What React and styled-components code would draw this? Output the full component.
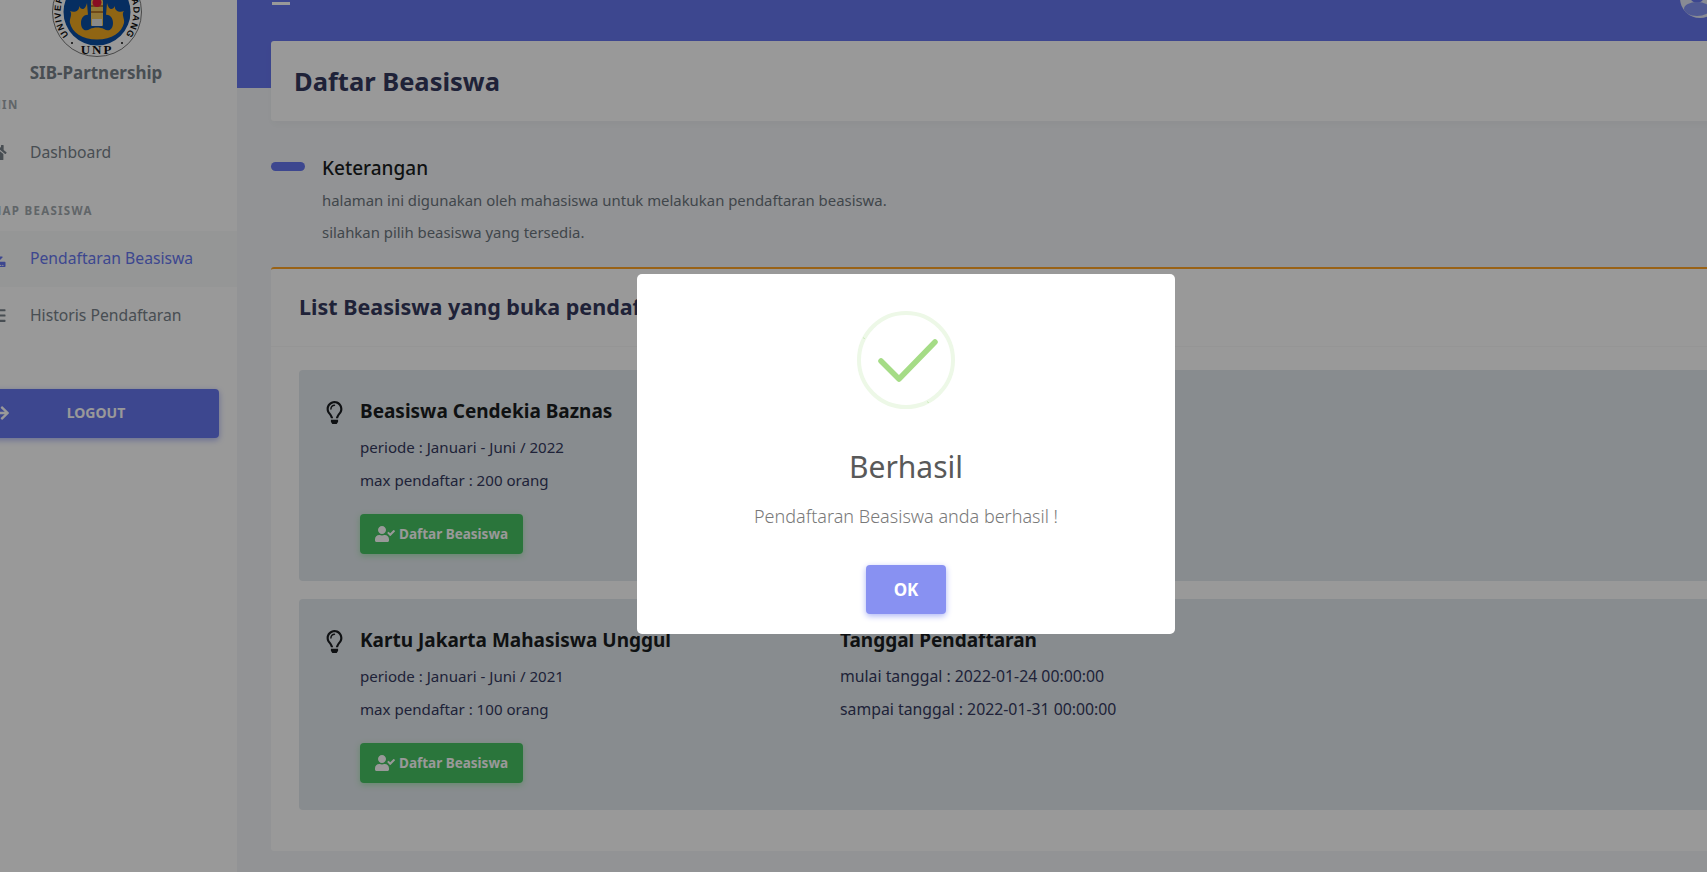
import React from 'react';
import styled, { createGlobalStyle } from 'styled-components';
import {
  FaHome,
  FaDownload,
  FaList,
  FaArrowRight,
  FaRegLightbulb,
  FaUserCheck,
} from 'react-icons/fa';

const GlobalStyle = createGlobalStyle`
  html, body {
    margin: 0;
    height: 100%;
    overflow: hidden;
    background: #f4f6f9;
    font-family: "Noto Sans", "Open Sans", sans-serif;
    color: #6c757d;
  }
  * { box-sizing: border-box; }
`;

const Page = styled.div`
  display: grid;
  grid-template-columns: 237px 1fr;
  height: 872px;
  overflow: hidden;
`;

const Sidebar = styled.aside`
  background: #fff;
  display: flex;
  flex-direction: column;
  align-items: stretch;
  overflow: hidden;
`;

const LogoWrap = styled.div`
  margin: -33px 0 0 52px;
  width: 90px;
  height: 90px;
`;

const BrandName = styled.div`
  margin-top: 4px;
  height: 24px;
  line-height: 24px;
  width: 192px;
  text-align: center;
  font-size: 17px;
  font-weight: 700;
  color: #79828a;
`;

const MenuHeader = styled.div`
  height: 40px;
  line-height: 39px;
  margin-left: ${(p) => p.$offset}px;
  font-size: 11.5px;
  font-weight: 700;
  letter-spacing: 1.3px;
  color: #a1a8ae;
  text-transform: uppercase;
  white-space: nowrap;
`;

const MenuItem = styled.div`
  display: flex;
  align-items: center;
  height: ${(p) => p.$h || 56}px;
  margin-left: -17px;
  padding-bottom: 2px;
  gap: 19px;
  font-size: 15.7px;
  white-space: nowrap;
  color: ${(p) => (p.$active ? '#6777ef' : '#78828a')};
  background: ${(p) => (p.$active ? '#f8fafb' : 'transparent')};

  svg {
    width: 28px;
    height: 17px;
    flex: none;
  }
`;

const Gap = styled.div`
  height: ${(p) => p.$h}px;
  flex: none;
`;

const LogoutButton = styled.div`
  display: grid;
  grid-template-columns: 1fr auto 1fr;
  align-items: center;
  margin: 44px 18px 0 -27px;
  height: 49px;
  padding: 0 18px 2px;
  background: #6777ef;
  border-radius: 4px;
  box-shadow: 0 2px 6px #acb5f6;
  color: #fff;
  font-size: 14px;
  font-weight: 700;

  svg {
    width: 16px;
    height: 16px;
    margin-left: 3px;
  }
`;

const Main = styled.main`
  position: relative;
  min-width: 0;
  overflow: hidden;
`;

const Topbar = styled.div`
  height: 88px;
  background: #6777ef;
  padding: 2px 0 0 35px;
`;

const Hamburger = styled.div`
  width: 18px;
  height: 3px;
  background: #fff;
`;

const Avatar = styled.div`
  position: absolute;
  top: -22px;
  right: -13px;
  width: 40px;
  height: 40px;
`;

const Content = styled.div`
  margin: -47px -40px 0 34px;
`;

const TitleCard = styled.div`
  height: 80px;
  padding-left: 23px;
  display: flex;
  align-items: center;
  background: #fff;
  border-radius: 3px;
  box-shadow: 0 4px 8px rgba(0, 0, 0, 0.03);
`;

const Title = styled.h1`
  margin: 0;
  font-size: 25.5px;
  font-weight: 700;
  color: #34395e;
`;

const Intro = styled.section`
  display: grid;
  grid-template-columns: 34px 1fr;
  column-gap: 17px;
  padding-top: 31px;
  height: 146px;
`;

const Pill = styled.div`
  width: 34px;
  height: 9px;
  margin-top: 10px;
  border-radius: 5px;
  background: #6777ef;
`;

const IntroTitle = styled.div`
  height: 32px;
  line-height: 32px;
  font-size: 19px;
  font-weight: 500;
  color: #191d21;
`;

const IntroLine = styled.p`
  margin: 0;
  height: 32px;
  line-height: 32px;
  font-size: 14.9px;
  color: #6c757d;
`;

const ListCard = styled.section`
  height: 584px;
  background: #fff;
  border-top: 2px solid #ffa426;
  border-radius: 3px;
`;

const ListHeader = styled.div`
  height: 78px;
  padding: 0 0 2px 28px;
  display: flex;
  align-items: center;
  border-bottom: 1px solid #f9f9f9;
`;

const ListTitle = styled.h4`
  margin: 0;
  font-size: 21.5px;
  font-weight: 700;
  color: #34395e;
`;

const ListBody = styled.div`
  display: flex;
  flex-direction: column;
  gap: 18px;
  padding: 23px 0 0 28px;
`;

const Item = styled.article`
  display: grid;
  grid-template-columns: 61px 480px 1fr;
  height: 211px;
  padding-top: 25px;
  background: #e3e9ee;
  border-radius: 4px;
`;

const BulbCell = styled.div`
  padding: 6px 0 0 24px;
  color: #191d21;
  font-size: 23px;
  line-height: 1;
`;

const ItemTitle = styled.h5`
  margin: 0 0 4px;
  height: 32px;
  line-height: 32px;
  font-size: 19px;
  font-weight: 700;
  color: #191d21;
  white-space: nowrap;
`;

const ItemLine = styled.p`
  margin: 0;
  height: 33px;
  line-height: 33px;
  font-size: 15.1px;
  color: #34395e;
  white-space: nowrap;
`;

const DateLine = styled(ItemLine)`
  font-size: 15.8px;
`;

const RegisterButton = styled.div`
  display: inline-flex;
  align-items: center;
  gap: 4px;
  margin-top: 17px;
  height: 40px;
  padding: 0 15px;
  background: #47c363;
  border-radius: 4px;
  box-shadow: 0 2px 6px #a8e6b6;
  color: #fff;
  font-size: 13.5px;
  font-weight: 700;

  svg {
    width: 20px;
    height: 16px;
  }
`;

const Overlay = styled.div`
  position: fixed;
  inset: 0;
  padding: 36px 0 0 105px;
  background: rgba(0, 0, 0, 0.4);
  display: grid;
  place-items: center;
`;

const Modal = styled.div`
  width: 538px;
  height: 360px;
  padding-top: 36px;
  background: #fff;
  border-radius: 5px;
  display: flex;
  flex-direction: column;
  align-items: center;
`;

const ModalTitle = styled.h2`
  margin: 33px 0 0;
  height: 48px;
  line-height: 48px;
  font-size: 30px;
  font-weight: 400;
  color: #595959;
`;

const ModalText = styled.p`
  margin: 10px 0 0;
  height: 30px;
  line-height: 30px;
  font-size: 18px;
  font-weight: 300;
  color: #797979;
`;

const OkButton = styled.button`
  margin-top: 34px;
  width: 80px;
  height: 49px;
  border: 0;
  border-radius: 4px;
  background: #8891f2;
  box-shadow: 0 2px 6px #acb5f6;
  color: #fff;
  font: 700 17px "Noto Sans", sans-serif;
`;

function UnpLogo() {
  return (
    <svg viewBox="0 0 90 90" width="90" height="90">
      <defs>
        <path id="ringPath" d="M45 81.5 A36.5 36.5 0 1 1 45.1 81.5" fill="none" />
      </defs>
      <circle cx="45" cy="45" r="44.5" fill="#fff" stroke="#555" strokeWidth="0.8" />
      <text fontFamily="Liberation Sans, sans-serif" fontSize="9" fontWeight="700" fill="#111">
        <textPath href="#ringPath" startOffset="32" textLength="164" lengthAdjust="spacing">
          UNIVERSITAS NEGERI PADANG
        </textPath>
      </text>
      <circle cx="20" cy="76" r="1" fill="#111" />
      <circle cx="70" cy="76" r="1" fill="#111" />
      <circle cx="45" cy="45" r="33.5" fill="#0b4ea2" />
      {/* gold flames and the U under them */}
      <path d="M35 36 C33 44 29 43 27 39 C28 44 22 46 18 44 C21 47 17 52 18 56 C20 65 30 72.5 45 72.5 C60 72.5 70 65 72 56 C73 52 69 47 72 44 C68 46 62 44 63 39 C61 43 57 44 55 36 L54 48 L36 48 Z" fill="#f0a820" />
      <path d="M29 56 C29 50 33 47 37 48 L53 48 C57 47 61 50 61 56 C61 63 56 65 52 62 C48 60 42 60 38 62 C34 65 29 63 29 56 Z" fill="#0b4ea2" />
      <rect x="39" y="33" width="12" height="26" rx="1" fill="#f2c65a" />
      <rect x="39" y="38" width="12" height="2" fill="#b87a28" />
      <rect x="39" y="44" width="12" height="2" fill="#b87a28" />
      <rect x="40" y="52" width="10" height="7" fill="#e6e6e6" />
      <circle cx="45" cy="35.5" r="4.5" fill="#e5173a" />
      <text x="45" y="87" textAnchor="middle" fontFamily="Liberation Serif, serif" fontSize="13" fontWeight="700" fill="#111" letterSpacing="2">
        UNP
      </text>
    </svg>
  );
}

function SuccessIcon() {
  return (
    <svg viewBox="0 0 98 100" width="98" height="100">
      <circle cx="49" cy="50" r="47" fill="none" stroke="#edf8e7" strokeWidth="4" />
      <path d="M6.5 27.5 L7.5 29 M70.5 91.5 L71.5 93" stroke="#c5e8b2" strokeWidth="1" />
      <path d="M24 51 L42 69 L78 32" fill="none" stroke="#a5dc86" strokeWidth="5.5" strokeLinecap="round" strokeLinejoin="round" />
    </svg>
  );
}

function AvatarIcon() {
  return (
    <svg viewBox="0 0 40 40" width="40" height="40">
      <defs>
        <clipPath id="avatarClip">
          <circle cx="20" cy="20" r="20" />
        </clipPath>
      </defs>
      <circle cx="20" cy="20" r="20" fill="#e3e8f7" />
      <g clipPath="url(#avatarClip)">
        <circle cx="17" cy="18" r="7" fill="#6777ef" />
        <ellipse cx="17" cy="31" rx="13" ry="7" fill="#8494f5" />
      </g>
    </svg>
  );
}

const beasiswa = [
  { id: 1, name: 'Beasiswa Cendekia Baznas', periode: 'Januari - Juni / 2022', max: 200, mulai: '2022-01-24 00:00:00', sampai: '2022-01-31 00:00:00' },
  { id: 2, name: 'Kartu Jakarta Mahasiswa Unggul', periode: 'Januari - Juni / 2021', max: 100, mulai: '2022-01-24 00:00:00', sampai: '2022-01-31 00:00:00' },
];

function BeasiswaItem({ item }) {
  return (
    <Item>
      <BulbCell>
        <FaRegLightbulb />
      </BulbCell>
      <div>
        <ItemTitle>{item.name}</ItemTitle>
        <ItemLine>periode : {item.periode}</ItemLine>
        <ItemLine>max pendaftar : {item.max} orang</ItemLine>
        <RegisterButton>
          <FaUserCheck />
          Daftar Beasiswa
        </RegisterButton>
      </div>
      <div>
        <ItemTitle>Tanggal Pendaftaran</ItemTitle>
        <DateLine>mulai tanggal : {item.mulai}</DateLine>
        <DateLine>sampai tanggal : {item.sampai}</DateLine>
      </div>
    </Item>
  );
}

export default function App() {
  return (
    <>
      <GlobalStyle />
      <Page>
        <Sidebar>
          <LogoWrap>
            <UnpLogo />
          </LogoWrap>
          <BrandName>SIB-Partnership</BrandName>
          <MenuHeader $offset={-29}>Admin</MenuHeader>
          <MenuItem>
            <FaHome />
            Dashboard
          </MenuItem>
          <Gap $h={10} />
          <MenuHeader $offset={-24}>Tahap Beasiswa</MenuHeader>
          <MenuItem $active>
            <FaDownload />
            Pendaftaran Beasiswa
          </MenuItem>
          <MenuItem $h={58}>
            <FaList />
            Historis Pendaftaran
          </MenuItem>
          <LogoutButton>
            <FaArrowRight />
            <span>LOGOUT</span>
          </LogoutButton>
        </Sidebar>
        <Main>
          <Topbar>
            <Hamburger />
          </Topbar>
          <Avatar>
            <AvatarIcon />
          </Avatar>
          <Content>
            <TitleCard>
              <Title>Daftar Beasiswa</Title>
            </TitleCard>
            <Intro>
              <Pill />
              <div>
                <IntroTitle>Keterangan</IntroTitle>
                <IntroLine>halaman ini digunakan oleh mahasiswa untuk melakukan pendaftaran beasiswa.</IntroLine>
                <IntroLine>silahkan pilih beasiswa yang tersedia.</IntroLine>
              </div>
            </Intro>
            <ListCard>
              <ListHeader>
                <ListTitle>List Beasiswa yang buka pendaftaran</ListTitle>
              </ListHeader>
              <ListBody>
                {beasiswa.map((item) => (
                  <BeasiswaItem key={item.id} item={item} />
                ))}
              </ListBody>
            </ListCard>
          </Content>
        </Main>
      </Page>
      <Overlay>
        <Modal>
          <SuccessIcon />
          <ModalTitle>Berhasil</ModalTitle>
          <ModalText>Pendaftaran Beasiswa anda berhasil !</ModalText>
          <OkButton>OK</OkButton>
        </Modal>
      </Overlay>
    </>
  );
}
